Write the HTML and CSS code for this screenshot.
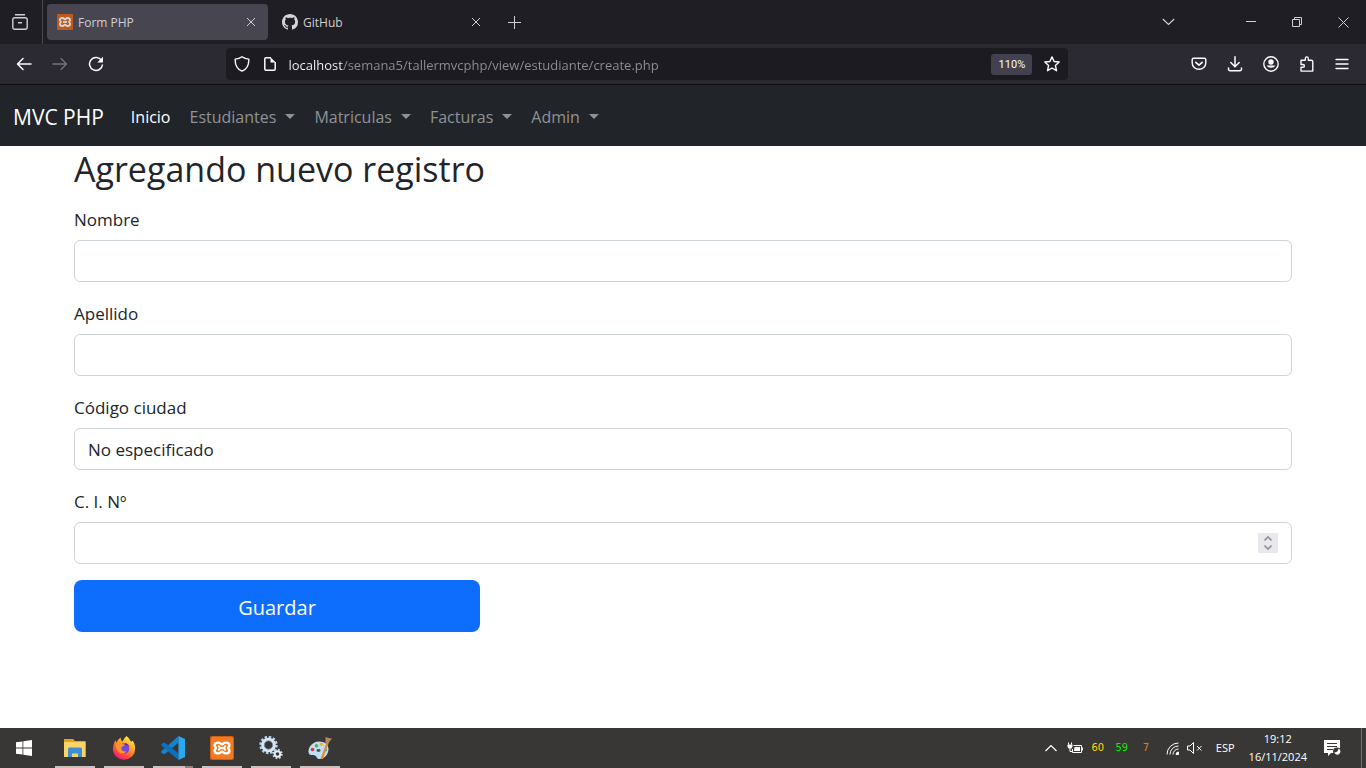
FILE: index.html
```html
<!DOCTYPE html>
<html lang="es">
<head>
<meta charset="utf-8">
<meta name="viewport" content="width=device-width, initial-scale=1">
<title>Form PHP</title>
<link rel="stylesheet" href="styles.css">
</head>
<body>
<svg class="sprite" aria-hidden="true">
  <symbol id="xampp" viewBox="0 0 24 24">
    <rect width="24" height="24" rx="2" fill="#cf5c14"/>
    <rect x="1" y="1" width="22" height="22" rx="2" fill="#f07b22"/>
    <path d="M8.300 6.600C5.500 6.600 4.600 7.600 4.600 9.300 4.600 10.800 5.800 11.200 5.800 12S4.600 13.200 4.600 14.700C4.600 16.400 5.500 17.400 8.300 17.400 11 17.400 10.500 15.800 12 15.800S13 17.400 15.700 17.400C18.500 17.400 19.400 16.400 19.400 14.700 19.400 13.200 18.200 12.800 18.200 12S19.400 10.800 19.400 9.300C19.400 7.600 18.500 6.600 15.700 6.600 13 6.600 13.500 8.200 12 8.200S11 6.600 8.300 6.600z" fill="none" stroke="#fff" stroke-width="2.400"/>
    <path d="M8.500 9.300Q9 12 12 12T15.500 14.700M15.500 9.300Q15 12 12 12T8.500 14.700" fill="none" stroke="#fff" stroke-width="1.800"/>
  </symbol>
  <symbol id="xampp-tab" viewBox="0 0 16 16">
    <rect width="16" height="16" rx="1" fill="#bd5a1e"/>
    <path d="M5.500 4C3.700 4 2.900 4.700 2.900 6S4 7.300 4 8 2.900 8.700 2.900 10s.8 2 2.600 2S7 10.600 8 10.600 8.700 12 10.500 12s2.600-.7 2.600-2S12 8.700 12 8s1.100-.7 1.100-2-.8-2-2.600-2S9 5.400 8 5.400 7.300 4 5.500 4z" fill="none" stroke="#d8d4d4" stroke-width="1.800"/>
    <path d="M6 8h4" stroke="#d8d4d4" stroke-width="1.800"/>
  </symbol>
  <symbol id="close" viewBox="0 0 10 10"><path d="M1 1l8 8M9 1L1 9" fill="none" stroke="currentColor"/></symbol>
</svg>

<header class="browser">
  <div class="tabstrip">
    <button class="recent" aria-label="Vista de Firefox">
      <svg width="16" height="16" viewBox="0 0 16 16" fill="none" stroke="currentColor" stroke-width="1.400"><path d="M3 .8h10M6 8.800h4"/><path d="M.8 5.800q0-2 2-2h10.400q2 0 2 2v7.400q0 2-2 2H2.800q-2 0-2-2z"/></svg>
    </button>
    <div class="tab tab-active">
      <svg width="16" height="16"><use href="#xampp-tab"/></svg>
      <span class="tab-title">Form PHP</span>
      <button class="tab-close" aria-label="Cerrar pestaña"><svg width="10" height="10"><use href="#close"/></svg></button>
    </div>
    <div class="tab">
      <svg width="16" height="16" viewBox="0 0 16 16" fill="#d5d5d8"><path d="M8 0C3.580 0 0 3.580 0 8c0 3.540 2.290 6.530 5.470 7.590.4.070.55-.17.55-.38 0-.19-.01-.82-.01-1.490-2.010.37-2.530-.49-2.690-.94-.09-.23-.48-.94-.82-1.130-.28-.15-.68-.52-.01-.53.63-.01 1.080.58 1.230.82.72 1.210 1.870.87 2.330.66.070-.52.280-.87.510-1.070-1.780-.2-3.640-.89-3.640-3.950 0-.87.310-1.590.820-2.150-.08-.2-.36-1.020.080-2.120 0 0 .67-.21 2.200.820.640-.18 1.320-.27 2-.27s1.360.090 2 .27c1.530-1.040 2.200-.82 2.200-.82.440 1.100.160 1.920.080 2.120.510.560.820 1.270.820 2.150 0 3.070-1.870 3.750-3.650 3.950.29.250.540.730.540 1.480 0 1.070-.01 1.930-.01 2.200 0 .21.150.460.550.380A8.010 8.010 0 0 0 16 8c0-4.420-3.580-8-8-8z"/></svg>
      <span class="tab-title">GitHub</span>
      <button class="tab-close" aria-label="Cerrar pestaña"><svg width="10" height="10"><use href="#close"/></svg></button>
    </div>
    <button class="new-tab" aria-label="Nueva pestaña"><svg width="13" height="13" viewBox="0 0 13 13" stroke="currentColor"><path d="M6.500 0v13M0 6.500h13"/></svg></button>
    <div class="window-buttons">
      <button class="all-tabs" aria-label="Listar pestañas"><svg width="13" height="8" viewBox="0 0 13 8" fill="none" stroke="currentColor" stroke-width="1.200"><path d="M.8 1l5.700 5.500L12.200 1"/></svg></button>
      <button aria-label="Minimizar"><svg width="10" height="10" viewBox="0 0 10 10" stroke="currentColor"><path d="M0 4.500h10"/></svg></button>
      <button aria-label="Restaurar"><svg width="10" height="10" viewBox="0 0 10 10" fill="none" stroke="currentColor"><path d="M.5 2.500h7v7h-7zM2.500 2.500v-2h7v7h-2"/></svg></button>
      <button aria-label="Cerrar"><svg width="11" height="11" viewBox="0 0 11 11" stroke="currentColor"><path d="M.5.500l10 10M10.500.500l-10 10"/></svg></button>
    </div>
  </div>
  <div class="toolbar">
    <div class="nav-buttons">
      <button aria-label="Atrás"><svg width="16" height="16" viewBox="0 0 16 16" fill="none" stroke="currentColor" stroke-width="1.500" stroke-linecap="round" stroke-linejoin="round"><path d="M15 8H1.500M7 2.500L1.500 8 7 13.500"/></svg></button>
      <button class="dim" aria-label="Adelante"><svg width="16" height="16" viewBox="0 0 16 16" fill="none" stroke="currentColor" stroke-width="1.400" stroke-linecap="round" stroke-linejoin="round"><path d="M1 8h13.500M9 2.500L14.500 8 9 13.500"/></svg></button>
      <button aria-label="Recargar"><svg width="16" height="16" viewBox="0 0 16 16" fill="none" stroke="currentColor" stroke-width="1.500"><path d="M13.600 4.600A6.500 6.500 0 1 0 14.500 8.500"/><path d="M15 .8v5.700H9.300z" fill="currentColor" stroke="none"/></svg></button>
    </div>
    <div class="urlbar">
      <svg width="16" height="16" viewBox="0 0 16 16" fill="none" stroke="currentColor" stroke-width="1.400" stroke-linejoin="round"><path d="M8 .8C6 2.300 3.600 3 1.200 3.100 1 8.500 3 13 8 15.200c5-2.200 7-6.700 6.800-12.100C12.400 3 10 2.300 8 .8z"/></svg>
      <svg class="page-icon" width="16" height="16" viewBox="0 0 16 16" fill="none" stroke="currentColor" stroke-width="1.500" stroke-linejoin="round"><path d="M9 1.800H4q-1.200 0-1.200 1.200v10q0 1.200 1.200 1.200h8q1.200 0 1.200-1.200V6"/><path d="M8.500 1.200L13.800 6.500H8.500z" fill="currentColor" stroke="none"/></svg>
      <input class="url" type="text" aria-label="Dirección" value="localhost/semana5/tallermvcphp/view/estudiante/create.php">
      <button class="zoom-level">110%</button>
      <button aria-label="Marcador"><svg width="16" height="16" viewBox="0 0 16 16" fill="none" stroke="currentColor" stroke-width="1.400" stroke-linejoin="round"><path d="M8 .9l2.100 4.600 5.100.5-3.800 3.400 1.100 5.300L8 12l-4.500 2.700 1.100-5.300L.8 6l5.100-.5z"/></svg></button>
    </div>
    <div class="tools">
      <button aria-label="Pocket"><svg width="16" height="16" viewBox="0 0 16 16" fill="none" stroke="currentColor" stroke-width="1.400" stroke-linecap="round" stroke-linejoin="round"><path d="M2.600 2.200h10.800q1.400 0 1.400 1.400V7A6.800 6.300 0 0 1 1.200 7V3.600q0-1.400 1.400-1.400z"/><path d="M4.800 6.300L8 9.200l3.200-2.900" stroke-width="1.600"/></svg></button>
      <button aria-label="Descargas"><svg width="16" height="16" viewBox="0 0 16 16" fill="none" stroke="currentColor" stroke-width="1.500" stroke-linecap="round" stroke-linejoin="round"><path d="M8 .8v9.800M3.800 6.500L8 10.700l4.200-4.200M1.500 12v1.300q0 1.400 1.400 1.400h10.200q1.400 0 1.400-1.400V12"/></svg></button>
      <button aria-label="Cuenta"><svg width="16" height="16" viewBox="0 0 16 16"><circle cx="8" cy="8" r="7.200" fill="none" stroke="currentColor" stroke-width="1.400"/><circle cx="8" cy="6" r="2.700" fill="currentColor"/><path d="M3.500 9.500h9a5 4 0 0 1-9 0z" fill="currentColor"/></svg></button>
      <button aria-label="Extensiones"><svg width="16" height="16" viewBox="0 0 16 16" fill="none" stroke="currentColor" stroke-width="1.400" stroke-linejoin="round"><path d="M2 4.300h4.300V2.500q0-1.600 1.500-1.600t1.500 1.600v1.800h3q1.500 0 1.500 1.500v9.300H2v-3.800h2q1.400 0 1.400-1.400T4 8.500H2z"/></svg></button>
      <button aria-label="Menú"><svg width="14" height="16" viewBox="0 0 14 16" stroke="currentColor" stroke-width="1.400" stroke-linecap="round"><path d="M1 3.500h12M1 8h12M1 12.500h12"/></svg></button>
    </div>
  </div>
</header>

<nav class="navbar">
  <a class="brand" href="#">MVC PHP</a>
  <ul class="menu">
    <li><a class="link current" href="#">Inicio</a></li>
    <li><a class="link dropdown" href="#">Estudiantes</a></li>
    <li><a class="link dropdown" href="#">Matriculas</a></li>
    <li><a class="link dropdown" href="#">Facturas</a></li>
    <li><a class="link dropdown" href="#">Admin</a></li>
  </ul>
</nav>

<main class="content">
  <h1>Agregando nuevo registro</h1>
  <form class="form">
    <div class="fields">
      <div class="field"><label for="nombre">Nombre</label><input class="control" id="nombre" type="text"></div>
      <div class="field"><label for="apellido">Apellido</label><input class="control" id="apellido" type="text"></div>
      <div class="field"><label for="ciudad">Código ciudad</label><select class="control" id="ciudad"><option>No especificado</option></select></div>
      <div class="field"><label for="ci">C. I. Nº</label>
        <div class="number"><input class="control" id="ci" type="number"><span class="spinner"><svg width="8" height="14" viewBox="0 0 8 14" fill="none" stroke="currentColor" stroke-width="1.600"><path d="M.5 4.500L4 1l3.500 3.500M.5 9.500L4 13l3.500-3.500"/></svg></span></div>
      </div>
    </div>
    <button class="submit" type="button">Guardar</button>
  </form>
</main>

<footer class="taskbar">
  <button class="start" aria-label="Inicio de Windows"><svg width="16" height="16" viewBox="0 0 16 16" fill="#fff"><path d="M0 2.300l6.500-.9v6.200H0zM7.300 1.300L16 0v7.600H7.300zM0 8.400h6.500v6.200L0 13.700zM7.300 8.400H16V16l-8.700-1.300z"/></svg></button>
  <div class="apps">
    <button class="app" aria-label="Explorador"><svg width="24" height="24" viewBox="0 0 24 24"><path d="M1 3h9l2 2h10.500v16H1z" fill="#e3a21a"/><path d="M1 6h21.500v15H1z" fill="#fbd467"/><path d="M5 21v-8q0-1.500 1.500-1.500h11Q19 11.500 19 13v8h-4v-3.500H9V21z" fill="#3a8fd6"/></svg></button>
    <button class="app" aria-label="Firefox"><svg width="24" height="24" viewBox="0 0 24 24"><defs><linearGradient id="ff" x1=".8" y1=".1" x2=".25" y2="1"><stop offset="0" stop-color="#ffe94b"/><stop offset=".45" stop-color="#ff8a20"/><stop offset=".8" stop-color="#ff3750"/><stop offset="1" stop-color="#e3158a"/></linearGradient></defs><path d="M14.500 0q3 2 4.200 5.200Q20 6 20.500 4.500q3 4 2.500 9A11 10.500 0 0 1 1 13Q.8 8 3.500 4q.2 1.500 1 2.500Q6 3.500 8.500 1.500q0 2.500 2 4Q12 2 14.500 0z" fill="url(#ff)"/><circle cx="12" cy="12.500" r="5.300" fill="#7549d8"/><path d="M4 8q3-2 5.500-.2 1.500 1 3.500.7-.5 1.800-3 2-1.500 1.500-.2 3.500 1.500 2 4.700 1.200-2.500 3.300-6 2Q3.500 14.500 4 8z" fill="#ff9528"/><path d="M13 7q3.500.5 4.500 4-2-2.500-4.500-2z" fill="#4a35b8"/></svg></button>
    <button class="app app-group" aria-label="Visual Studio Code"><svg width="24" height="24" viewBox="0 0 24 24"><path d="M17.500 0v6.700L3.600 18.200.3 16.700v-1.500z" fill="#1681cf"/><path d="M.3 8.200l3-2 14.200 11V24L.3 9.500z" fill="#0e70b9"/><path d="M17.500 0L24 3v18l-6.500 3z" fill="#29a9f2"/></svg></button>
    <button class="app" aria-label="XAMPP"><svg width="24" height="24"><use href="#xampp"/></svg></button>
    <button class="app" aria-label="Servicios"><svg width="24" height="24" viewBox="0 0 24 24" fill="none"><circle cx="9.500" cy="9" r="7.700" stroke="#b9d1e8" stroke-width="3" stroke-dasharray="2.400 1.630"/><circle cx="9.500" cy="9" r="5.800" stroke="#d8e6f2" stroke-width="3"/><circle cx="9.500" cy="9" r="4.200" stroke="#7594b4" stroke-width=".7"/><circle cx="18.500" cy="18" r="4.200" stroke="#c4d9ec" stroke-width="2" stroke-dasharray="1.700 1.600"/><circle cx="18.500" cy="18" r="2.800" stroke="#e4edf5" stroke-width="2"/></svg></button>
    <button class="app" aria-label="Paint"><svg width="24" height="24" viewBox="0 0 24 24"><path d="M11 5.500c6 0 9.500 3 9.500 7.500s-3.500 10-9 10c-3 0-2.500-2.500-4.500-3.500S1 20.500.500 16 4.500 5.500 11 5.500z" fill="#bfe0f3"/><ellipse cx="10.500" cy="14.500" rx="2" ry="1.400" fill="#45535e"/><circle cx="4.500" cy="13.500" r="1.800" fill="#d93a2e"/><circle cx="8.500" cy="9.700" r="1.800" fill="#5fae3a"/><circle cx="13.500" cy="8.200" r="1.800" fill="#f0b429"/><circle cx="17.500" cy="14" r="1.500" fill="#3e7ac2"/><path d="M12.500 23l5.800-16 2 1-5.300 15z" fill="#e58b2d"/><path d="M17.500 1l3 1 3.500.5-2.500 3-1.500 3-2.500-1.200z" fill="#b58a5a"/></svg></button>
  </div>
  <div class="tray">
    <svg width="12" height="8" viewBox="0 0 12 8" fill="none" stroke="currentColor" stroke-width="1.200"><path d="M.5 7L6 1.500 11.500 7"/></svg>
    <svg width="16" height="13" viewBox="0 0 16 13" fill="none" stroke="currentColor"><path d="M1.500.500v2M4.500.500v2M3 6v3.500h2M6.500 3.500h8v7h-9V7M15.500 5.500v3"/><path d="M7.500 5H13v4H7zM.5 2.500h5v2l-1 2h-3l-1-2z" fill="currentColor" stroke="none"/></svg>
    <span class="temp yellow">60</span>
    <span class="temp green">59</span>
    <span class="temp orange">7</span>
    <svg class="wifi" width="14" height="13" viewBox="0 0 14 13" fill="none" stroke="currentColor"><path d="M1 12.500A11.500 11.500 0 0 1 12.500 1M4 12.500A8.500 8.500 0 0 1 12.500 4M7 12.500A5.500 5.500 0 0 1 12.500 7"/><path d="M10 12.500A2.500 2.500 0 0 1 12.500 10v2.500z" fill="currentColor"/></svg>
    <svg width="16" height="12" viewBox="0 0 16 12" fill="none" stroke="currentColor"><path d="M.5 4v4H3l3.500 3.500V.5L3 4zM10 4l4.500 4.500M14.500 4L10 8.500"/></svg>
    <span class="lang">ESP</span>
    <time class="clock" datetime="2024-11-16T19:12"><span>19:12</span><span>16/11/2024</span></time>
    <svg class="notice" width="17" height="16" viewBox="0 0 17 16"><path d="M0 0h16v13H7l-3 3v-3H0z" fill="#fff"/><path d="M3 3.500h10M3 6.500h10M3 9.500h6" stroke="#393735"/><circle cx="13" cy="11.500" r="4" fill="#393735"/><path d="M14.500 8.500a3.200 3.200 0 1 1-4.300 4 4 4 0 0 0 4.300-4z" fill="#fff"/></svg>
  </div>
</footer>
</body>
</html>
```

FILE: styles.css
```css
* { box-sizing: border-box; }

body {
  margin: 0;
  min-height: 100vh;
  display: flex;
  flex-direction: column;
  background: #fff;
  color: #212529;
  font: 16px/26px "Segoe UI", "Open Sans", "Noto Sans", sans-serif;
}

svg { display: block; flex: none; }
button, input, select { font: inherit; color: inherit; }
button { background: none; border: 0; padding: 0; }
.sprite { position: absolute; width: 0; height: 0; }

/* Browser window */
.browser { color: #fbfbfe; border-bottom: 1px solid #0c0c0d; }

.tabstrip {
  display: flex;
  align-items: center;
  height: 44px;
  background: #1f1e25;
  color: #cfcfd3;
  font-size: 12px;
}

.recent {
  width: 43px;
  height: 44px;
  padding-left: 12px;
  margin-right: 4px;
  border-right: 1px solid #4a4951;
}

.tab {
  display: flex;
  align-items: center;
  gap: 5px;
  width: 221px;
  height: 36px;
  padding: 0 12px 0 10px;
  margin-right: 4px;
  border-radius: 4px;
}
.tab-active { background: #474650; }
.tab-title { flex: 1; padding-top: 2px; }
.new-tab { margin-left: 11px; }
.window-buttons { display: flex; margin-left: auto; }
.window-buttons button { display: grid; place-items: center; width: 46px; height: 44px; }
.window-buttons .all-tabs { margin-right: 37px; }

.toolbar {
  display: flex;
  align-items: center;
  height: 40px;
  padding: 0 17px 0 16px;
  background: #2b2a33;
}
.nav-buttons, .tools { display: flex; gap: 20px; }
.nav-buttons { flex: 3 0 0; }
.tools { flex: 4 0 0; justify-content: flex-end; }
.dim { color: #75747b; }

.urlbar {
  display: flex;
  align-items: center;
  width: 842px;
  height: 32px;
  padding: 0 8px;
  border-radius: 4px;
  background: #1c1b22;
}
.page-icon { margin: 0 10px 0 12px; }
.url {
  flex: 1;
  min-width: 0;
  padding: 2px 0 0;
  border: 0;
  font-size: 13px;
  background: linear-gradient(90deg, #fbfbfe 55px, #8f8f96 55px);
  background-clip: text;
  -webkit-text-fill-color: transparent;
}
.zoom-level {
  width: 41px;
  height: 21px;
  margin-right: 12px;
  border-radius: 3px;
  background: #42414d;
  font: 11px/21px Roboto, sans-serif;
}

/* Site navigation */
.navbar {
  display: flex;
  align-items: center;
  height: 61px;
  padding: 2px 13px 0;
  background: #212529;
}
.navbar a { text-decoration: none; }
.brand { margin-right: 27px; color: #fff; font-size: 21px; }
.menu { display: flex; gap: 19px; margin: 0; padding: 0; list-style: none; }
.link { display: flex; align-items: center; color: #909294; }
.current { color: #fff; }
.dropdown::after {
  content: "";
  margin-left: 9px;
  border: 5px solid transparent;
  border-top-color: currentColor;
  border-bottom: 0;
}

/* Form */
.content { flex: 1; padding: 0 74px 24px; font-size: 17px; }
h1 { margin: 0 0 14px; font-size: 34px; font-weight: 400; line-height: 46px; }
.form { display: grid; gap: 16px; }
.fields { display: grid; gap: 18px; }
.field { display: grid; gap: 6px; line-height: 28px; }
.control {
  width: 100%;
  height: 42px;
  padding: 2px 13px 0;
  border: 1px solid #ced4da;
  border-radius: 6px;
  background: #fff;
  appearance: none;
}
.number { display: grid; align-items: center; }
.number > * { grid-area: 1 / 1; }
.number .control { appearance: textfield; }
.spinner {
  display: grid;
  place-items: center;
  justify-self: end;
  width: 20px;
  height: 20px;
  margin-right: 14px;
  background: #e9e9ed;
  color: #8f8f9d;
}
.submit {
  width: calc(100% / 3);
  height: 52px;
  padding-top: 4px;
  border-radius: 8px;
  background: #0d6efd;
  color: #fff;
  font-size: 20px;
}

/* Taskbar */
.taskbar {
  display: flex;
  align-items: stretch;
  height: 40px;
  background: #393735;
  color: #fff;
}
.start { display: grid; place-items: center; width: 48px; }
.apps { display: flex; gap: 9px; margin-left: 7px; }
.app { display: grid; place-items: center; width: 40px; border-bottom: 2px solid #cdc1bd; padding-top: 2px; }
.app-group { border-image: linear-gradient(90deg, #cdc1bd 78%, #8e8582 78%) 2; }
.tray {
  display: flex;
  align-items: center;
  margin-left: auto;
  margin-right: 4px;
  padding-right: 20px;
  border-right: 1px solid #75736f;
  font-size: 11px;
  line-height: 18px;
}
.tray > svg:first-child { margin-right: 10px; }
.temp { width: 24px; text-align: center; font: 11px/18px "DejaVu Sans Condensed", "DejaVu Sans", sans-serif; }
.tray > svg + .temp { margin-left: 3px; }
.yellow { color: #ffd800; }
.green { color: #00f000; }
.orange { color: #f07800; }
.wifi { margin: 0 7px 0 8px; }
.lang { margin: 0 14px 0 13px; }
.clock { display: flex; flex-direction: column; align-items: center; }
.notice { margin-left: 17px; }
```
